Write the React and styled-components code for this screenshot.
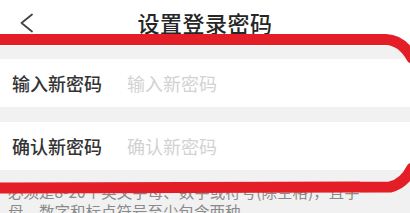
import styled, { createGlobalStyle } from 'styled-components'

const Global = createGlobalStyle`
  html, body { margin: 0; padding: 0; background: #f1f1f1; }
  body { font-family: "Noto Sans CJK SC", "Noto Sans", sans-serif; overflow: hidden; }
`

const Page = styled.div`
  position: relative;
  width: 410px;
  height: 213px;
  overflow: hidden;
  background: #f1f1f1;
`

const Header = styled.div`
  display: grid;
  grid-template-columns: 60px 1fr 60px;
  align-items: center;
  height: 46px;
  background: #fff;
`

const Back = styled.div`
  display: flex;
  align-items: center;
  padding-left: 19px;
  height: 100%;
`

const Title = styled.h1`
  margin: 0;
  padding-bottom: 2px;
  text-align: center;
  font-size: 22px;
  font-weight: 500;
  color: #262626;
  letter-spacing: 0.5px;
`

const Form = styled.div`
  display: flex;
  flex-direction: column;
  gap: 15px;
  margin-top: 13px;
`

const Row = styled.label`
  display: flex;
  align-items: center;
  height: 48px;
  padding-left: 12px;
  background: #fff;
`

const Label = styled.span`
  width: 115px;
  font-size: 18px;
  font-weight: 500;
  color: #333;
`

const Field = styled.input`
  flex: 1;
  border: none;
  outline: none;
  background: transparent;
  font-family: inherit;
  font-size: 18px;
  color: #333;
  padding: 0;
  &::placeholder { color: #d2d2d2; }
`

const Tip = styled.p`
  margin: 0;
  padding: 11px 8px 0;
  font-size: 15.5px;
  line-height: 20px;
  color: #8a8a8a;
  white-space: nowrap;
`

const Mark = styled.svg`
  position: absolute;
  left: 0;
  top: 0;
  pointer-events: none;
`

export default function App() {
  return (
    <Page>
      <Global />
      <Header>
        <Back>
          <svg width="16" height="20" viewBox="0 0 16 20">
            <path d="M13 1.5 L2.5 10 L13 18.5" fill="none" stroke="#444" strokeWidth="1.8" strokeLinecap="round" strokeLinejoin="round" />
          </svg>
        </Back>
        <Title>设置登录密码</Title>
        <div />
      </Header>
      <Form>
        <Row>
          <Label>输入新密码</Label>
          <Field type="password" placeholder="输入新密码" />
        </Row>
        <Row>
          <Label>确认新密码</Label>
          <Field type="password" placeholder="确认新密码" />
        </Row>
      </Form>
      <Tip>
        必须是8-20个英文字母、数字或符号(除空格)，且字<br />
        母、数字和标点符号至少包含两种
      </Tip>
      <Mark width="410" height="213" viewBox="0 0 410 213">
        <path d="M-5 39.5 L386 39.5 Q402 40 412 58" fill="none" stroke="#e31e26" strokeWidth="11" strokeLinecap="round" />
        <path d="M-5 188 L390 187 Q404 184 412 168" fill="none" stroke="#e31e26" strokeWidth="11" strokeLinecap="round" />
      </Mark>
    </Page>
  )
}
